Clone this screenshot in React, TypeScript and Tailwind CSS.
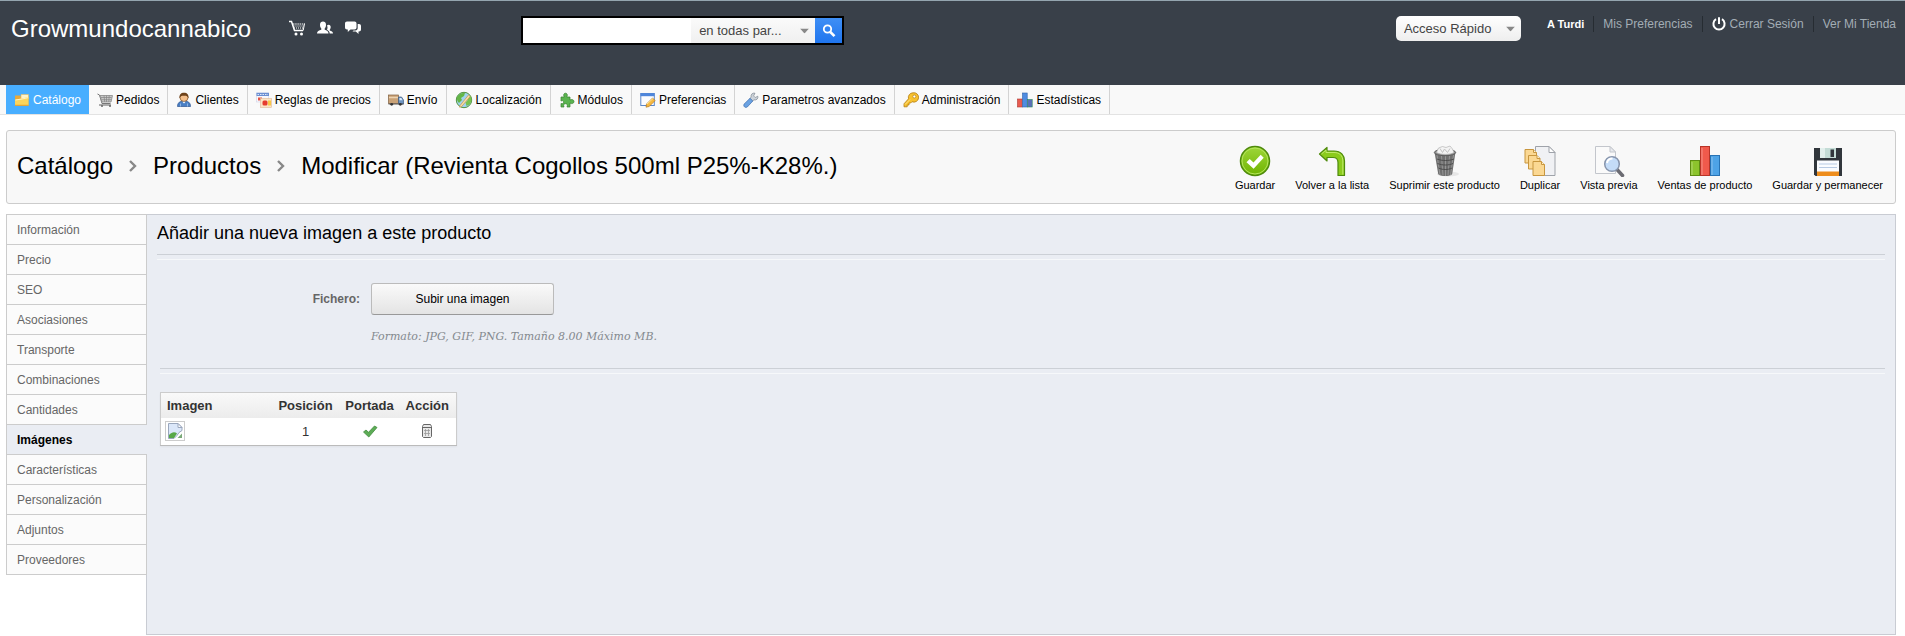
import type { ReactNode } from "react";

const CatalogIcon = () => (
  <svg className="h-4 w-4" viewBox="0 0 16 16">
    <path d="M1 3.500h5l1 1.500h7.500v8.500H1z" fill="#e9a93a" />
    <path d="M7 2.500h7.500V7H7z" fill="#fff3c8" stroke="#e5b95a" strokeWidth=".6" />
    <path d="M1 7.500l7-1 6.500-1.500v8.500H1z" fill="#fbd45c" />
    <path d="M1.500 8l6.500-1 6-1.300" stroke="#fff4c4" fill="none" />
    <path d="M1 13.300h13.500" stroke="#e59f2c" />
  </svg>
);

const CartIcon = () => (
  <svg className="h-4 w-4" viewBox="0 0 16 16" fill="none">
    <path d="M.5 2l2 1 2.500 8.500h8.500" stroke="#777" />
    <path d="M3 3.500h12.500L14 10H5z" fill="#c9c9c9" stroke="#888" strokeWidth=".8" />
    <path d="M4 5.500h10.500M4.700 7.700h9.500M7 3.500l.7 6.500M9.500 3.500V10M12.200 3.500L11.800 10" stroke="#848484" strokeWidth=".7" />
    <path d="M2 13h12" stroke="#777" strokeWidth="1.200" />
    <circle cx="5" cy="14" r="1" fill="#666" />
    <circle cx="13" cy="14" r="1" fill="#666" />
  </svg>
);

const ClientIcon = () => (
  <svg className="h-4 w-4" viewBox="0 0 16 16">
    <path d="M1.500 14.500c0-4 2.500-5.500 6.500-5.500s6.500 1.500 6.500 5.500z" fill="#4a7fc4" stroke="#2c5590" strokeWidth=".7" />
    <path d="M4.500 14.500v-3M11.500 14.500v-3" stroke="#9fc2ec" strokeWidth=".8" />
    <circle cx="8" cy="5.500" r="4" fill="#f4bf8b" stroke="#7a4b1e" strokeWidth=".7" />
    <path d="M3.500 6.500C3 2.500 5 .7 8 .7s5 1.800 4.500 5.800c-.7-2.300-1.700-2.800-4.500-2.800s-3.800.5-4.500 2.800z" fill="#6e431b" />
    <path d="M6.500 9.800L8 11.500l1.500-1.700z" fill="#fff" />
  </svg>
);

const PriceRuleIcon = () => (
  <svg className="h-4 w-4" viewBox="0 0 16 16">
    <rect x=".5" y="1" width="12" height="9" fill="#f7f7fc" stroke="#cfd3e6" strokeWidth=".6" />
    <path d="M.5 .8h12.500v3.200H.5z" fill="#6b8fd2" />
    <path d="M1.500 2.500h10.500" stroke="#dfe8fb" strokeDasharray="1.500 1" />
    <path d="M2 5.500h4v3H2z" fill="#e65548" />
    <rect x="4.500" y="6.500" width="11" height="9" fill="#fbe3c4" stroke="#dfb994" strokeWidth=".6" />
    <rect x="6.500" y="8.500" width="5" height="5" rx="1.500" fill="#e53b2e" />
    <path d="M12 8.500h3v5h-3z" fill="#f9c846" />
  </svg>
);

const TruckIcon = () => (
  <svg className="h-4 w-4" viewBox="0 0 16 16">
    <rect x=".5" y="3" width="10" height="8.500" fill="#c9a277" stroke="#80603f" strokeWidth=".7" />
    <path d="M1 5.500h9" stroke="#ecd3b2" strokeWidth="1.500" />
    <path d="M10.500 5h3l2 3v4h-5z" fill="#6d93c0" stroke="#3c5a80" strokeWidth=".7" />
    <path d="M11.500 6h1.800l1.200 2.200h-3z" fill="#d9ecff" />
    <path d="M.5 11.500h15v1H.5z" fill="#555" />
    <circle cx="3.700" cy="12.300" r="1.400" fill="#333" />
    <circle cx="12.300" cy="12.300" r="1.400" fill="#333" />
  </svg>
);

const GlobeIcon = () => (
  <svg className="h-[18px] w-[18px]" viewBox="0 0 18 18">
    <circle cx="9" cy="9" r="7.700" fill="#9fd3ee" stroke="#53933f" />
    <path d="M2 6c2-3.500 5-4.500 8-4l-1 3-3 2 1 2-3 3C2.500 10.500 1.600 8.500 2 6z" fill="#63b546" />
    <path d="M12 6l3.500-1c1.500 3 1.300 6-1 8.500l-3 1.500-1-3.500 2-2z" fill="#77c24f" />
    <path d="M5 14.500L13.500 4l1.700 1.500-8.500 10-2.200.7z" fill="#f6dca6" stroke="#c18a3d" strokeWidth=".6" />
  </svg>
);

const ModuleIcon = () => (
  <svg className="h-4 w-4" viewBox="0 0 16 16">
    <path
      d="M2 5h3.300C4 2.800 5 1.200 6.500 1.200S9 2.800 7.800 5H11v3c2.200-1.200 4 0 4 1.600s-1.800 2.700-4 1.500V15H8c1-2.500-.2-3.300-1.500-3.300S4 12.500 5 15H2v-3.500c2 .8 2.600-.4 2.600-1.400S4 8 2 9z"
      fill="#5bb450"
      stroke="#37802f"
      strokeWidth=".7"
    />
  </svg>
);

const PreferenceIcon = () => (
  <svg className="h-4 w-4" viewBox="0 0 16 16">
    <rect x=".8" y="1.500" width="13.500" height="12" fill="#fbfcff" stroke="#5d87c8" />
    <path d="M.5 1.200h14v3H.5z" fill="#4e86dc" />
    <path d="M6.500 12l6-6 2.700 2.500-6 6-3.200.7z" fill="#f5b83f" stroke="#ad6f18" strokeWidth=".6" />
    <path d="M7 12l6-5.500" stroke="#fde39a" />
  </svg>
);

const WrenchIcon = () => (
  <svg className="h-4 w-4" viewBox="0 0 16 16">
    <path
      d="M14.800 4.200l-2.600 1.300-1.600-1.600L12 1.200c-2.300-.6-4.500 1.200-3.900 3.800L7 6.500 9.500 9l1.500-1.100c2.600.6 4.500-1.500 3.800-3.700z"
      fill="#cdd3da"
      stroke="#808892"
      strokeWidth=".7"
    />
    <path d="M7 6.300L9.800 9l-5.500 6c-2 1.300-4.300-.7-3.300-2.800z" fill="#6ba2e2" stroke="#3b6cae" strokeWidth=".7" />
  </svg>
);

const KeyIcon = () => (
  <svg className="h-4 w-4" viewBox="0 0 16 16">
    <path
      d="M10 .8a4.700 4.700 0 00-4.500 6L1 11.800v3h3.200v-1.800H6v-2h1.700l1.300-1.300A4.700 4.700 0 1010 .8z"
      fill="#f7c12f"
      stroke="#b47d14"
      strokeWidth=".8"
    />
    <circle cx="11.300" cy="4.500" r="1.500" fill="#fff" stroke="#b47d14" strokeWidth=".7" />
    <path d="M2 12.500L7 7.500" stroke="#ffe48a" />
  </svg>
);

const StatsIcon = () => (
  <svg className="h-4 w-4" viewBox="0 0 16 16" strokeWidth=".6">
    <rect x=".5" y="7" width="4.700" height="8" fill="#e85b50" stroke="#b03a32" />
    <rect x="5.500" y="1" width="4.700" height="14" fill="#4f8ce0" stroke="#2f62aa" />
    <rect x="10.500" y="7.500" width="4.700" height="7.500" fill="#5a6fb8" stroke="#2b8a5a" />
  </svg>
);

const SaveIcon = () => (
  <svg className="h-8 w-8" viewBox="0 0 32 32">
    <defs>
      <linearGradient id="save" x1="0" y1="0" x2="0" y2="1">
        <stop offset="0" stopColor="#9ed63a" />
        <stop offset="1" stopColor="#6fb400" />
      </linearGradient>
    </defs>
    <circle cx="16" cy="16" r="14.500" fill="url(#save)" stroke="#4e8a0c" strokeWidth="1.500" />
    <circle cx="16" cy="16" r="13" fill="none" stroke="#b4e55c" />
    <path d="M7.500 17.200l3.200-3.300 3.800 3.600 7.200-7.700 3 3L14.600 23.800z" fill="#fff" />
  </svg>
);

const BackIcon = () => (
  <svg className="h-8 w-8" viewBox="0 0 32 32">
    <path
      d="M3.500 9l7.500-6.500v3.500h7c7 0 10.500 4.300 10.500 10v14.500h-6.500V17.500c0-3.500-1.500-5-5-5H11v3.500z"
      fill="#8bcb1c"
      stroke="#4e8a0c"
      strokeWidth="1.200"
      strokeLinejoin="round"
    />
    <path d="M5.500 9l4.500-4v2.500h8c5.500 0 8.800 3 8.800 8.500v13.500" fill="none" stroke="#bfe96a" />
  </svg>
);

const TrashIcon = () => (
  <svg className="h-8 w-8" viewBox="0 0 32 32">
    <ellipse cx="19" cy="29" rx="11" ry="2.500" fill="#e6e6e6" />
    <path d="M5.500 7h21l-3.300 22c-1.500 2.800-12.500 2.800-14 0z" fill="#6f6f6f" />
    <path d="M8 10l3 20M12.500 11l1.500 19.500M16.500 11v20M20.500 11L19 30.500M24.500 10l-3 20" stroke="#959595" fill="none" />
    <path d="M8 14c5 2 12 2 17 0M8.500 18.500c5 2 11 2 15.500 0M9.500 23c4 2 9.500 2 13.500 0" stroke="#4c4c4c" fill="none" />
    <ellipse cx="16" cy="7.500" rx="10.700" ry="3.200" fill="#8c8c8c" stroke="#5d5d5d" />
    <path d="M7.500 7.500l2-4.500 4-1.500 3.500 1 4-1.500 2.500 3 1.500 3.500c-4 2.500-13 2.500-17.500 0z" fill="#f3f3f3" stroke="#b5b5b5" strokeWidth=".7" />
    <path d="M11 3.500l2.500 4 2-3.500 3 3.500 2.500-4" stroke="#c4c4c4" fill="none" />
  </svg>
);

const DuplicateIcon = () => (
  <svg className="h-8 w-8" viewBox="0 0 32 32">
    <path d="M11.500 1.500H25l6 6v23h-19.500z" fill="#f0f1f4" stroke="#9fa3aa" />
    <path d="M25 1.500v6h6z" fill="#fff" stroke="#9fa3aa" />
    <g fill="#fbd893" stroke="#c8963e">
      <path d="M1 4.500h8.500l3 3V18H1z" />
      <path d="M4.500 10.500H13l3 3V24H4.500z" />
      <path d="M9 16.500h8.500l3 3v11H9z" />
    </g>
    <path d="M9.500 4.500v3h3M13 10.500v3h3M17.500 16.500v3h3" fill="#fff1d0" stroke="#c8963e" />
  </svg>
);

const PreviewIcon = () => (
  <svg className="h-8 w-8" viewBox="0 0 32 32">
    <path d="M2.500 1.500H17l5.500 5.500v21.500h-20z" fill="#fafafa" stroke="#c3c6cc" />
    <path d="M17 1.500V7h5.500z" fill="#e8eaee" stroke="#c3c6cc" />
    <path d="M24 24.500l5.500 6" stroke="#6b6b72" strokeWidth="3.500" strokeLinecap="round" />
    <circle cx="19" cy="19" r="7.300" fill="#c4dcf8" stroke="#8795ad" strokeWidth="1.500" />
    <path d="M14 18c.5-3 2.500-4.500 5.500-4.500" stroke="#fff" strokeWidth="2" fill="none" />
  </svg>
);

const SalesIcon = () => (
  <svg className="h-8 w-8" viewBox="0 0 32 32">
    <rect x="1.500" y="15.500" width="9" height="15" fill="#8cc42c" stroke="#5d8d12" />
    <rect x="11.500" y="1.500" width="9" height="29" fill="#f05a4c" stroke="#b83428" />
    <rect x="21.500" y="10.500" width="9" height="20" fill="#4ea3e6" stroke="#2873b4" />
    <path d="M3 17v13M13 3v27M23 12v18" stroke="#fff" strokeOpacity=".35" />
  </svg>
);

const FloppyIcon = () => (
  <svg className="h-8 w-8" viewBox="0 0 32 32">
    <path d="M2 3h28v28H3.500L2 29.500z" fill="#31363c" />
    <rect x="8" y="3" width="16" height="10" fill="#c4dcd6" />
    <path d="M8 3h5v10H8z" fill="#e2efec" />
    <rect x="18.500" y="4.500" width="3.500" height="7.500" fill="#31363c" />
    <rect x="5" y="15.500" width="22" height="12" fill="#fafcff" />
    <path d="M7 19h18M7 22.500h18" stroke="#b8cbe4" />
    <path d="M5 26.500h22V31H5z" fill="#ee8d1c" />
  </svg>
);

const NAV_TABS: { label: string; icon: ReactNode; active?: boolean }[] = [
  { label: "Catálogo", icon: <CatalogIcon />, active: true },
  { label: "Pedidos", icon: <CartIcon /> },
  { label: "Clientes", icon: <ClientIcon /> },
  { label: "Reglas de precios", icon: <PriceRuleIcon /> },
  { label: "Envío", icon: <TruckIcon /> },
  { label: "Localización", icon: <GlobeIcon /> },
  { label: "Módulos", icon: <ModuleIcon /> },
  { label: "Preferencias", icon: <PreferenceIcon /> },
  { label: "Parametros avanzados", icon: <WrenchIcon /> },
  { label: "Administración", icon: <KeyIcon /> },
  { label: "Estadísticas", icon: <StatsIcon /> },
];

const TOOLBAR = [
  { label: "Guardar", icon: <SaveIcon /> },
  { label: "Volver a la lista", icon: <BackIcon /> },
  { label: "Suprimir este producto", icon: <TrashIcon /> },
  { label: "Duplicar", icon: <DuplicateIcon /> },
  { label: "Vista previa", icon: <PreviewIcon /> },
  { label: "Ventas de producto", icon: <SalesIcon /> },
  { label: "Guardar y permanecer", icon: <FloppyIcon /> },
];

const SECTIONS = [
  "Información",
  "Precio",
  "SEO",
  "Asociasiones",
  "Transporte",
  "Combinaciones",
  "Cantidades",
  "Imágenes",
  "Características",
  "Personalización",
  "Adjuntos",
  "Proveedores",
];

function Caret() {
  return (
    <svg className="pointer-events-none absolute top-1/2 right-1.5 h-[5px] w-[9px] -translate-y-1/2" viewBox="0 0 9 5">
      <path d="M0 0h9L4.500 5z" fill="#888" />
    </svg>
  );
}

function Header() {
  return (
    <header className="flex h-[85px] items-start border-t border-[#94a5af] bg-[#394049] pr-[9px] pl-[11px]">
      <a href="#" className="mt-3 text-2xl leading-8 text-white">
        Growmundocannabico
      </a>
      <div className="mt-[19px] ml-[38px] flex gap-3 text-white">
        <a href="#" aria-label="Pedidos">
          <svg className="h-4 w-4" viewBox="0 0 16 16" fill="none">
            <path d="M0 1.500h2.500L5.500 10.500H14" stroke="currentColor" strokeWidth="1.500" />
            <path d="M4 4h11.500" stroke="currentColor" strokeDasharray="1.500 .7" />
            <path d="M4.500 6h10.500M5 8h9.500" stroke="currentColor" strokeDasharray="1 1" />
            <path d="M15.500 3.500l-1.300 7" stroke="currentColor" />
            <circle cx="7" cy="14" r="1.500" fill="currentColor" />
            <circle cx="12.500" cy="14" r="1.500" fill="currentColor" />
          </svg>
        </a>
        <a href="#" aria-label="Clientes">
          <svg className="h-4 w-4" viewBox="0 0 16 16" fill="currentColor">
            <path d="M0 13.500c0-2.500 2-3 4.300-3.700V8.500C3.500 7.700 3 6.300 3 4.700 3 2.700 4.300 1.500 6 1.500s3 1.200 3 3.200c0 1.600-.5 3-1.300 3.800v1.300c2 .7 3.800 1.200 3.800 3.700z" />
            <path d="M10 5.500c.4-.5 1-.8 1.700-.8 1.300 0 2 1 2 2.300 0 1.200-.4 2-1 2.700v.8c1.700.5 3.300 1 3.300 3h-3.300c0-2-1.200-3-2.700-3.800.6-1 .8-2.500 0-4.200z" />
          </svg>
        </a>
        <a href="#" aria-label="Mensajes">
          <svg className="h-4 w-4" viewBox="0 0 16 16" fill="currentColor">
            <path d="M2 1.500h7.500c1.200 0 2 .8 2 2v4c0 1.200-.8 2-2 2H5.500L2.800 12V9.500H2c-1.200 0-2-.8-2-2v-4c0-1.200.8-2 2-2z" />
            <path d="M12.700 4H14c1.200 0 2 .8 2 2v3.500c0 1.200-.8 2-2 2h-.5V14l-2.700-2.500H7.500l1-1h2c1.300 0 2.200-1 2.200-2.200z" />
          </svg>
        </a>
      </div>

      <form className="mt-[15px] ml-40 flex h-[29px] border-2 border-black bg-white">
        <input type="text" aria-label="Buscar" className="w-[168px] px-1 text-[13px] outline-none" />
        <div className="relative bg-linear-to-b from-[#fafafa] to-[#f0f0f0]">
          <select aria-label="Buscar en" className="h-full w-[124px] appearance-none pl-2 text-[13px] text-[#444] outline-none">
            <option>en todas par...</option>
          </select>
          <Caret />
        </div>
        <button type="button" aria-label="Buscar" className="flex w-[27px] items-center justify-center bg-linear-to-b from-[#3f8ff5] to-[#1f75ee] text-white">
          <svg className="h-3.5 w-3.5" viewBox="0 0 14 14" fill="none" stroke="currentColor">
            <circle cx="5.500" cy="5" r="3.700" strokeWidth="1.800" />
            <path d="M8.300 8l4.200 4.200" strokeWidth="2.600" />
          </svg>
        </button>
      </form>

      <div className="ml-auto flex text-xs text-[#a3adb5]">
        <div className="relative mt-[15px] mr-[26px] h-[25px] rounded-[5px] bg-linear-to-b from-white to-[#eee]">
          <select aria-label="Acceso Rápido" className="h-full w-[125px] appearance-none pl-2 text-[13px] text-[#444] outline-none">
            <option>Acceso Rápido</option>
          </select>
          <Caret />
        </div>
        <div className="mt-[15px] flex h-4 items-center leading-4">
          <a href="#" className="border-r border-[#262c32] pr-[9px] text-[11px] font-bold text-white">A Turdi</a>
          <a href="#" className="border-r border-[#262c32] px-[9px]">Mis Preferencias</a>
          <a href="#" className="flex items-center gap-1 border-r border-[#262c32] px-[9px]">
            <svg className="h-3.5 w-3.5 text-white" viewBox="0 0 14 14" fill="none" stroke="currentColor" strokeWidth="2">
              <path d="M4 2.200a5.600 5.600 0 106 0M7 .3V7" />
            </svg>
            Cerrar Sesión
          </a>
          <a href="#" className="pl-[9px]">Ver Mi Tienda</a>
        </div>
      </div>
    </header>
  );
}

function Nav() {
  return (
    <nav className="flex h-[30px] border-b border-[#e3e3e3] bg-[#f9f9f9] pl-1.5">
      {NAV_TABS.map((tab) => (
        <a
          key={tab.label}
          href="#"
          className={
            tab.active
              ? "flex items-center gap-[3px] bg-[#48aeff] px-2 text-xs text-white"
              : "flex items-center gap-[3px] border-r border-[#d3d3d3] px-2 text-xs text-black"
          }
        >
          {tab.icon}
          {tab.label}
        </a>
      ))}
    </nav>
  );
}

function Chevron() {
  return (
    <svg className="h-3 w-2" viewBox="0 0 8 12" fill="none" stroke="#888" strokeWidth="2.400">
      <path d="M1 1l5 5-5 5" />
    </svg>
  );
}

function PageTitle() {
  return (
    <div className="mt-[15px] mr-[9px] ml-1.5 flex h-[74px] items-center justify-between rounded-[3px] border border-[#ccc] bg-[#f8f8f8] pr-3 pl-2.5">
      <h1 className="flex items-center gap-4 pb-0.5 text-2xl leading-8 text-black">
        <a href="#">Catálogo</a>
        <Chevron />
        <a href="#">Productos</a>
        <Chevron />
        <span>Modificar (Revienta Cogollos 500ml P25%-K28%.)</span>
      </h1>
      <div className="flex gap-5 pt-1">
        {TOOLBAR.map((item) => (
          <button key={item.label} type="button" className="flex flex-col items-center text-[11px] leading-4 text-black">
            {item.icon}
            {item.label}
          </button>
        ))}
      </div>
    </div>
  );
}

function Sidebar() {
  return (
    <ul className="relative -mr-px w-[141px] self-start border-t border-l border-[#ccc] text-xs">
      {SECTIONS.map((name) => (
        <li key={name}>
          <a
            href="#"
            className={
              name === "Imágenes"
                ? "flex h-[30px] items-center border-b border-[#ccc] bg-[#eaedf3] pl-2.5 font-bold text-black"
                : "flex h-[30px] items-center border-r border-b border-[#ccc] bg-[#fbfbfb] pl-2.5 text-[#666]"
            }
          >
            {name}
          </a>
        </li>
      ))}
    </ul>
  );
}

function ImageTable() {
  return (
    <table className="mt-[18px] ml-[3px] border border-[#ccc] border-b-[#bbb] bg-white text-[13px] text-[#333] shadow-xs">
      <thead className="bg-linear-to-b from-[#f9f9f9] to-[#ececec]">
        <tr className="h-[25px]">
          <th className="w-[110px] pl-1.5 text-left">Imagen</th>
          <th className="w-[70px]">Posición</th>
          <th className="w-[58px]">Portada</th>
          <th className="w-[58px]">Acción</th>
        </tr>
      </thead>
      <tbody>
        <tr className="h-7 text-center">
          <td className="pl-1">
            <svg className="h-5 w-5 border border-[#ccc] p-px" viewBox="0 0 16 16" role="img" aria-label="Imagen">
              <path d="M1.500 .5H11l4 4v3l-3 2-2 3-3 3H1.500z" fill="#dbe7f9" stroke="#9aa7bd" />
              <path d="M11 .5v4h4z" fill="#fff" stroke="#9aa7bd" />
              <path d="M2 15v-3c3-3.500 6-3.500 8-1.500L7 15z" fill="#58a848" />
              <path d="M15 10.500V15h-4.500z" fill="#7aa978" />
            </svg>
          </td>
          <td>1</td>
          <td>
            <button type="button" aria-label="Portada" className="block w-full">
              <svg className="mx-auto h-4 w-4" viewBox="0 0 16 16">
                <path d="M1.500 9l2.500-2 2.500 2.300L12.500 3l2.500 1.500L6.800 14z" fill="#5dac56" stroke="#3f8c3b" strokeWidth=".8" />
              </svg>
            </button>
          </td>
          <td>
            <button type="button" aria-label="Eliminar" className="block w-full">
              <svg className="mx-auto h-4 w-4" viewBox="0 0 16 16" fill="none" stroke="#666">
                <path d="M4.500 1.500h7l1 2v10l-1 1h-7l-1-1v-10z" fill="#e8e8e8" />
                <path d="M3.500 4.500h9" />
                <path d="M6.500 6v7M9.500 6v7M5 7.500h6M5 10.500h6" stroke="#999" strokeWidth=".8" />
              </svg>
            </button>
          </td>
        </tr>
      </tbody>
    </table>
  );
}

function ImagesPanel() {
  return (
    <section className="flex-1 border border-[#c9ccd3] bg-[#eaedf3] px-2.5">
      <h2 className="mt-1 text-lg leading-7 text-black">Añadir una nueva imagen a este producto</h2>
      <div className="mt-[7px] h-1.5 border-t border-b border-t-[#ccd0d6] border-b-[#f6f8fa]" />
      <div className="mt-[23px] flex items-center">
        <label htmlFor="upload" className="w-[203px] text-right text-xs font-bold text-[#666]">
          Fichero:
        </label>
        <button
          id="upload"
          type="button"
          className="ml-[11px] h-8 w-[183px] rounded-[3px] border border-[#bbb] border-b-[#999] bg-linear-to-b from-[#fafafa] to-[#e4e4e4] text-xs text-black"
        >
          Subir una imagen
        </button>
      </div>
      <p className="mt-3 ml-[214px] font-['DejaVu_Serif',serif] text-[11px] leading-5 text-[#84898e] italic">
        Formato: JPG, GIF, PNG. Tamaño 8.00 Máximo MB.
      </p>
      <div className="mt-[21px] ml-[3px] h-1.5 border-t border-b border-t-[#ccd0d6] border-b-[#f6f8fa]" />
      <ImageTable />
    </section>
  );
}

export default function App() {
  return (
    <div className="flex min-h-screen flex-col bg-white pb-px font-['Liberation_Sans',Arial,sans-serif]">
      <Header />
      <Nav />
      <PageTitle />
      <main className="mt-2.5 mr-[9px] ml-1.5 flex flex-1">
        <Sidebar />
        <ImagesPanel />
      </main>
    </div>
  );
}
